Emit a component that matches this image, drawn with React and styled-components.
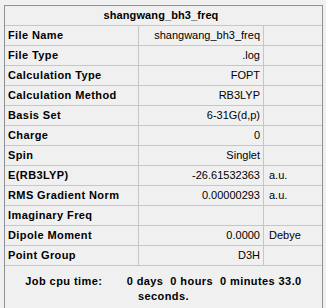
import React from "react";
import styled, { createGlobalStyle } from "styled-components";

const GlobalStyle = createGlobalStyle`
  html, body {
    margin: 0;
    padding: 0;
    background: #f0f0f0;
  }
  body {
    font-family: "Liberation Sans", Arial, sans-serif;
    font-size: 11px;
    color: #000;
  }
`;

const Page = styled.div`
  padding: 5px 0 0 4px;
`;

const Table = styled.div`
  width: 319px;
  box-sizing: border-box;
  border: 1px solid #8e9198;
  border-bottom: none;
  background: #f0f0f0;
`;

const Header = styled.div`
  height: 19px;
  line-height: 19px;
  border-bottom: 1px solid #c6c6c6;
  text-align: center;
  font-weight: bold;
  padding-right: 5px;
  letter-spacing: 0.1px;
`;

const Row = styled.div`
  display: grid;
  grid-template-columns: 134px 125px 1fr;
  height: 19px;
  line-height: 19px;
  border-bottom: 1px solid #c6c6c6;
`;

const Cell = styled.div`
  box-sizing: border-box;
  overflow: hidden;
  white-space: nowrap;
  border-right: ${(p) => (p.$last ? "none" : "1px solid #c6c6c6")};
`;

const Label = styled(Cell)`
  font-weight: bold;
  padding-left: 3px;
  letter-spacing: 0.4px;
`;

const Value = styled(Cell)`
  text-align: right;
  padding-right: 3px;
`;

const Unit = styled(Cell)`
  padding-left: 5px;
`;

const Footer = styled.div`
  height: 42px;
  box-sizing: border-box;
  padding: 8px 2px 0;
  text-align: center;
  font-weight: bold;
  line-height: 15px;
  letter-spacing: 0.42px;
`;

const rows = [
  ["File Name", "shangwang_bh3_freq", ""],
  ["File Type", ".log", ""],
  ["Calculation Type", "FOPT", ""],
  ["Calculation Method", "RB3LYP", ""],
  ["Basis Set", "6-31G(d,p)", ""],
  ["Charge", "0", ""],
  ["Spin", "Singlet", ""],
  ["E(RB3LYP)", "-26.61532363", "a.u."],
  ["RMS Gradient Norm", "0.00000293", "a.u."],
  ["Imaginary Freq", "", ""],
  ["Dipole Moment", "0.0000", "Debye"],
  ["Point Group", "D3H", ""],
];

const NB = "\u00a0";

export default function App() {
  return (
    <>
      <GlobalStyle />
      <Page>
        <Table>
          <Header>shangwang_bh3_freq</Header>
          {rows.map(([l, v, u]) => (
            <Row key={l}>
              <Label>{l}</Label>
              <Value>{v}</Value>
              <Unit $last>{u}</Unit>
            </Row>
          ))}
          <Footer>
            {"Job cpu time:" + NB.repeat(7) + "0 days" + NB + " 0 hours" + NB + " 0 minutes 33.0 seconds."}
          </Footer>
        </Table>
      </Page>
    </>
  );
}
